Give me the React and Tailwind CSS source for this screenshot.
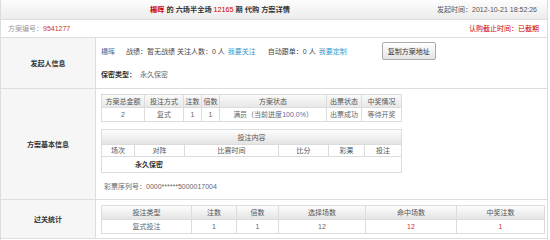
import React from 'react'

// 方案详情页 - 六场半全场代购

const th = 'border border-[#dcdcdc] font-normal text-[#555] text-center p-0'
const td = 'border border-[#dcdcdc] text-center p-0'

export default function App() {
  return (
    <div className="w-[548px] h-[240px] overflow-hidden bg-white border-l border-r border-[#ddd] text-[7px] leading-none text-[#666] font-['Liberation_Sans','Noto_Sans_CJK_SC',sans-serif]">
      {/* 标题栏 */}
      <div className="flex h-[20px] items-center border-b border-[#ddd] bg-linear-to-b from-[#fdfdfd] to-[#ececec]">
        <div className="flex-1 text-center font-bold text-[#333] text-[7.2px] pl-[2px]">
          <span className="text-[#c00]">楊晖</span> 的 六场半全场 <span className="text-[#c00] font-normal">12165</span> 期 代购 方案详情
        </div>
        <div className="pr-[10px] text-[#555]">发起时间：2012-10-21 18:52:26</div>
      </div>

      {/* 方案编号 */}
      <div className="flex h-[18px] items-center justify-between px-[7px] border-b border-[#ddd]">
        <div className="text-[#999]">
          方案编号：<span className="text-[#c33]">9541277</span>
        </div>
        <div className="text-[#c00] pr-[1px]">认购截止时间：已截期</div>
      </div>

      {/* 发起人信息 */}
      <div className="flex border-b border-[#ddd]">
        <div className="w-[95px] shrink-0 bg-[#f6f6f6] border-r border-[#ddd] flex items-center justify-center font-bold text-[#333]">
          发起人信息
        </div>
        <div className="h-[50px] pl-[5px] pt-[4px] flex flex-col">
          <div className="flex items-center h-[18px]">
            <span className="text-[#369]">楊晖</span>
            <span className="ml-[11px] text-[#444]">战绩：暂无战绩 关注人数：0 人</span>
            <span className="ml-[3px] text-[#39c]">我要关注</span>
            <span className="ml-[12px] text-[#444]">自动跟单：0 人</span>
            <span className="ml-[3px] text-[#39c]">我要定制</span>
            <button className="ml-[35px] w-[54px] h-[18px] border border-[#aaa] rounded-[2px] bg-linear-to-b from-[#fff] to-[#e4e4e4] text-[#333] text-[7px]">
              复制方案地址
            </button>
          </div>
          <div className="mt-[8px] h-[12px] flex items-center">
            <span className="font-bold text-[#333]">保密类型：</span>
            <span className="ml-[4px]">永久保密</span>
          </div>
        </div>
      </div>

      {/* 方案基本信息 */}
      <div className="flex border-b border-[#ddd]">
        <div className="w-[95px] shrink-0 bg-[#f6f6f6] border-r border-[#ddd] flex items-center justify-center font-bold text-[#333]">
          方案基本信息
        </div>
        <div className="h-[110px] pl-[5px] pt-[5px] flex flex-col">
          <table className="w-[300px] table-fixed border-collapse">
            <colgroup>
              <col className="w-[43px]" />
              <col className="w-[39px]" />
              <col className="w-[18px]" />
              <col className="w-[18px]" />
              <col className="w-[107px]" />
              <col className="w-[35px]" />
              <col className="w-[40px]" />
            </colgroup>
            <thead>
              <tr className="h-[13px] bg-linear-to-b from-[#fafafa] to-[#e6e6e6]">
                <th className={th}>方案总金额</th>
                <th className={th}>投注方式</th>
                <th className={th}>注数</th>
                <th className={th}>倍数</th>
                <th className={th}>方案状态</th>
                <th className={th}>出票状态</th>
                <th className={th}>中奖情况</th>
              </tr>
            </thead>
            <tbody>
              <tr className="h-[14px]">
                <td className={td}>2</td>
                <td className={td}>复式</td>
                <td className={td}>1</td>
                <td className={td}>1</td>
                <td className={td}>满员（当前进度<span className="text-[#669]">100.0%</span>）</td>
                <td className={td}>出票成功</td>
                <td className={td}>等待开奖</td>
              </tr>
            </tbody>
          </table>

          <table className="mt-[7px] w-[300px] table-fixed border-collapse">
            <colgroup>
              <col className="w-[33px]" />
              <col className="w-[50px]" />
              <col className="w-[94px]" />
              <col className="w-[50px]" />
              <col className="w-[36px]" />
              <col className="w-[37px]" />
            </colgroup>
            <thead>
              <tr className="h-[15px] bg-linear-to-b from-[#fdfdfd] to-[#e2e2e2]">
                <th colSpan={6} className={th}>投注内容</th>
              </tr>
              <tr className="h-[12px]">
                <th className={th}>场次</th>
                <th className={th}>对阵</th>
                <th className={th}>比赛时间</th>
                <th className={th}>比分</th>
                <th className={th}>彩果</th>
                <th className={th}>投注</th>
              </tr>
            </thead>
            <tbody>
              <tr className="h-[16px]">
                <td colSpan={6} className="border border-[#dcdcdc] p-0 pl-[33px] text-left font-bold text-[#333]">
                  永久保密
                </td>
              </tr>
            </tbody>
          </table>

          <div className="mt-[7px] h-[12px] flex items-center pl-[3px]">
            彩票序列号：0000******5000017004
          </div>
        </div>
      </div>

      {/* 过关统计 */}
      <div className="flex border-b border-[#ddd]">
        <div className="w-[95px] shrink-0 bg-[#f6f6f6] border-r border-[#ddd] flex items-center justify-center font-bold text-[#333]">
          过关统计
        </div>
        <div className="h-[38px] pl-[5px] pt-[5px]">
          <table className="w-[443px] table-fixed border-collapse">
            <colgroup>
              <col className="w-[90px]" />
              <col className="w-[45px]" />
              <col className="w-[42px]" />
              <col className="w-[87px]" />
              <col className="w-[91px]" />
              <col className="w-[88px]" />
            </colgroup>
            <thead>
              <tr className="h-[14px] bg-linear-to-b from-[#fdfdfd] to-[#e2e2e2]">
                <th className={th}>投注类型</th>
                <th className={th}>注数</th>
                <th className={th}>倍数</th>
                <th className={th}>选择场数</th>
                <th className={th}>命中场数</th>
                <th className={th}>中奖注数</th>
              </tr>
            </thead>
            <tbody>
              <tr className="h-[14px]">
                <td className={td}>复式投注</td>
                <td className={td}>1</td>
                <td className={td}>1</td>
                <td className={td}>12</td>
                <td className={td + ' text-[#c33]'}>12</td>
                <td className={td + ' text-[#c33]'}>1</td>
              </tr>
            </tbody>
          </table>
        </div>
      </div>
    </div>
  )
}
